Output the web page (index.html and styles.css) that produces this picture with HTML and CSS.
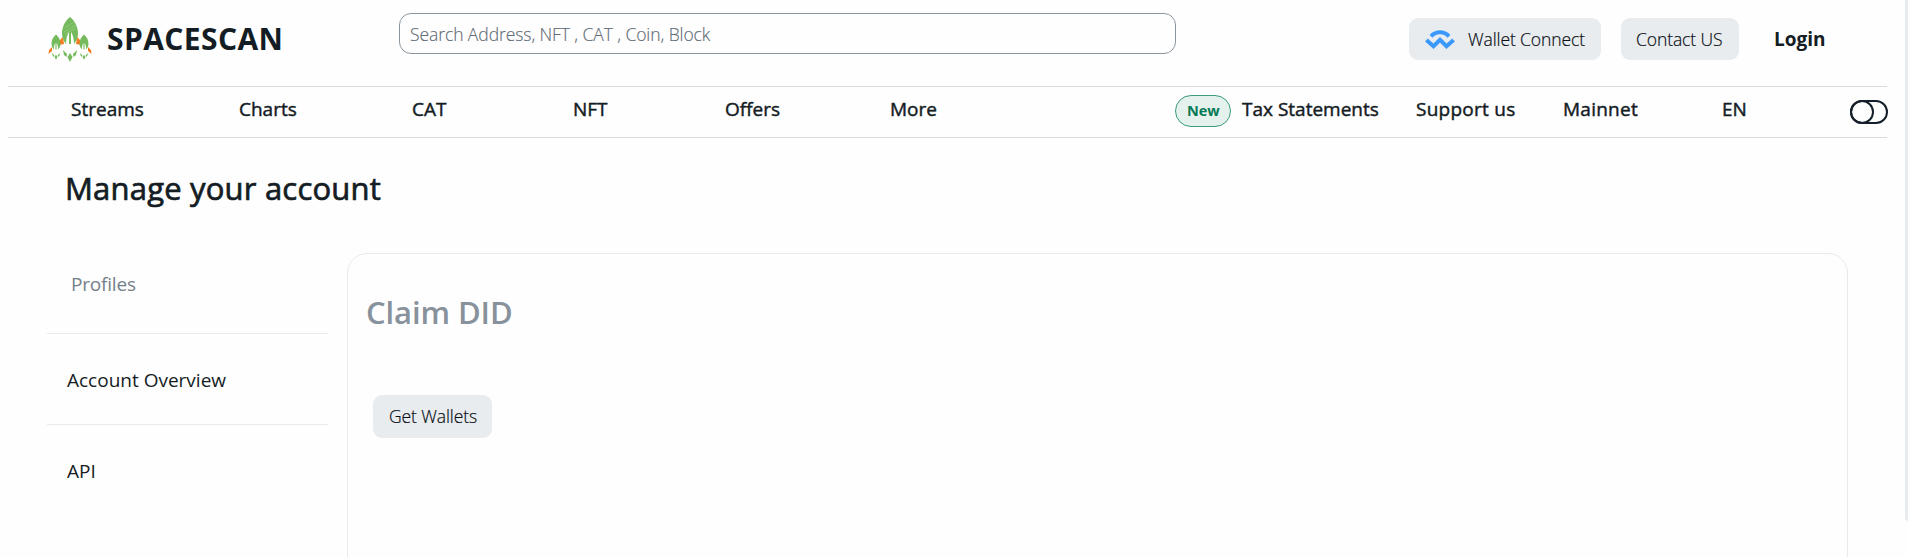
FILE: index.html
```html
<!DOCTYPE html>
<html lang="en">
<head>
<meta charset="utf-8">
<title>Spacescan</title>
<link rel="stylesheet" href="styles.css">
</head>
<body>
<header class="top">
  <a class="brand">
    <svg class="brand-mark" viewBox="0 0 44 46" width="44" height="46">
      <defs>
        <g id="ship">
          <path d="M0 0C5 4 8 10 8 16.500C8 20 6.500 24 4 27C4 22 3 18 1 15V27H-1V15C-3 18-4 22-4 27C-6.500 24-8 20-8 16.500C-8 10-5 4 0 0Z"/>
          <path d="M-7 33L-3 37L-3.500 40L-6 38Z M7 33L3 37L3.500 40L6 38Z M0 36L2.500 40L0 45L-2.500 40Z"/>
        </g>
      </defs>
      <path fill="#f47c20" d="M15 21L11 25V29L16 28Z M29 21L33 25V29L28 28Z M4 31L1 34L.500 38L4 35Z M40 31L43 34L43.500 38L40 35Z"/>
      <g fill="#75ba5c">
        <use href="#ship" transform="translate(22 1)"/>
        <use href="#ship" transform="translate(8 18.500) scale(.56)"/>
        <use href="#ship" transform="translate(36 18.500) scale(.56)"/>
      </g>
      <path stroke="#9ed087" stroke-width="1" d="M16.500 12L26 6M16 16L28 9M17 18L28 12" opacity=".7"/>
    </svg>
    <span class="brand-name">SPACESCAN</span>
  </a>
  <div class="search"><span>Search Address, NFT , CAT , Coin, Block</span></div>
  <div class="actions">
    <a class="btn btn-wallet">
      <svg width="30" height="19" viewBox="0 0 30 19" fill="none" stroke="#3b99fc" stroke-width="4"><path d="M6 6.300C11 1 19 1 24 6.300"/><path d="M1.400 10L8.500 16.200L15 9.800L21.500 16.200L28.600 10"/></svg>
      <span>Wallet Connect</span>
    </a>
    <a class="btn btn-contact">Contact US</a>
    <a class="login">Login</a>
  </div>
</header>
<nav class="nav">
  <a>Streams</a><a>Charts</a><a>CAT</a><a>NFT</a><a>Offers</a><a>More</a>
  <span class="pill">New</span><a>Tax Statements</a><a class="nav-wide">Support us</a><a class="nav-wide">Mainnet</a><a>EN</a>
  <svg class="toggle" width="38" height="24" viewBox="0 0 38 24" fill="none" stroke="#16202a" stroke-width="2"><rect x="1" y="1" width="36" height="22" rx="11"/><circle cx="12" cy="12" r="11"/></svg>
</nav>
<main class="page">
  <h1 class="title">Manage your account</h1>
  <div class="columns">
    <aside class="side">
      <div class="side-item side-muted">Profiles</div>
      <div class="side-item">Account Overview</div>
      <div class="side-item">API</div>
    </aside>
    <section class="panel">
      <h2 class="panel-title">Claim DID</h2>
      <a class="btn btn-get">Get Wallets</a>
    </section>
  </div>
</main>
<div class="scroll-thumb"></div>
</body>
</html>
```
FILE: styles.css
```css
* { box-sizing: border-box; }
body { margin: 0; height: 557px; overflow: hidden; background: #fefefe; color: #141c24; font-family: "Open Sans", "Noto Sans", sans-serif; }
.top { display: flex; height: 86px; padding-left: 48px; }
.brand { display: flex; width: 351px; padding-top: 16px; }
.brand-mark { flex: none; }
.brand-name { margin-left: 15px; font-size: 30px; font-weight: 700; line-height: 46px; letter-spacing: 0.4px; }
.search { width: 777px; height: 41px; margin-top: 13px; padding-left: 10px; border: 1px solid #8b959e; border-radius: 12px; font-size: 17.5px; line-height: 40px; letter-spacing: -0.08px; color: #5f6b75; font-weight: 300; -webkit-text-stroke: 0.15px; white-space: nowrap; }
.actions { display: flex; padding: 18px 0 0 233px; }
.btn { display: flex; align-items: center; height: 42px; border-radius: 9px; background: #e8ecef; font-size: 17.5px; font-weight: 300; letter-spacing: -0.1px; color: #0a1016; -webkit-text-stroke: 0.2px; white-space: nowrap; }
.btn-wallet { width: 192px; margin-right: 20px; padding-left: 16px; gap: 13px; }
.btn-contact { width: 118px; padding-left: 15px; }
.login { margin-left: 35px; font-size: 19px; font-weight: 700; line-height: 42px; }
.nav { display: grid; grid-template-columns: 168px 173px 161px 152px 165px 284px 68px 174px 147px 159px 127px 38px; height: 52px; margin: 0 21px 0 8px; padding-left: 63px; border: solid #d9dcde; border-width: 1px 0; font-size: 19px; font-weight: 400; line-height: 44px; -webkit-text-stroke: 0.45px; white-space: nowrap; }
.nav-wide { letter-spacing: 0.25px; }
.pill { width: 56px; height: 32px; margin-top: 8px; margin-left: 1px; padding-left: 11px; border: 1px solid #3a9c7a; border-radius: 16px; background: #e5f1ed; color: #087a55; font-size: 14.5px; font-weight: 700; line-height: 29px; -webkit-text-stroke: 0; }
.toggle { margin: 13px 0 0 1px; }
.page { padding: 0 61px 0 47px; }
.title { margin: 0; padding: 27px 0 0 18px; height: 115px; font-size: 31px; font-weight: 400; line-height: 46px; letter-spacing: 0.2px; -webkit-text-stroke: 0.7px; }
.columns { display: grid; grid-template-columns: 281px 1501px; column-gap: 19px; }
.side-item { height: 91px; padding: 34px 0 0 20px; border-bottom: 1px solid #e8eaeb; font-size: 19px; line-height: 24px; }
.side-muted { height: 81px; padding: 19px 0 0 24px; color: #74808a; letter-spacing: -0.2px; }
.side-item:last-child { border: 0; }
.panel { height: 330px; padding: 35px 0 0 18px; border: 1px solid #e8eaeb; border-radius: 20px; }
.panel-title { margin: 0; color: #88929c; font-size: 31px; font-weight: 600; line-height: 46px; letter-spacing: -0.1px; }
.btn-get { width: 119px; height: 43px; margin: 60px 0 0 7px; padding: 0 0 1px 16px; }
.scroll-thumb { position: absolute; top: 0; right: 0; width: 3px; height: 521px; border-radius: 0 0 0 3px; background: #e8ecef; }
```
